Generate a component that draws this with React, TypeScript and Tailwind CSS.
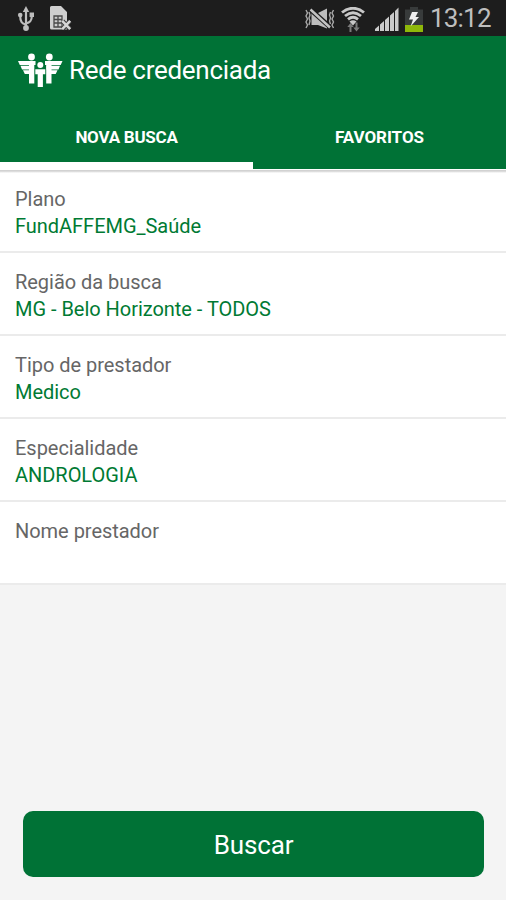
const FIELDS = [
  { label: 'Plano', value: 'FundAFFEMG_Saúde' },
  { label: 'Região da busca', value: 'MG - Belo Horizonte - TODOS' },
  { label: 'Tipo de prestador', value: 'Medico' },
  { label: 'Especialidade', value: 'ANDROLOGIA' },
  { label: 'Nome prestador', value: '' },
];

function UsbIcon() {
  return (
    <svg width="18" height="26" viewBox="0 0 18 26" fill="none" stroke="#bdbdbd" strokeWidth="2.2">
      <path d="M9 4v18M9 18.500C5 17.500 3.200 16 3.200 10M9 17.500c4-1 5.800-2.500 5.800-7.500" />
      <path d="M9 0 12.200 6H5.800z" fill="#bdbdbd" stroke="none" />
      <circle cx="9" cy="22" r="2.900" fill="#bdbdbd" stroke="none" />
      <circle cx="3.200" cy="9" r="2.300" fill="#bdbdbd" stroke="none" />
      <path d="M12.600 6.500H17V11h-4.400z" fill="#bdbdbd" stroke="none" />
    </svg>
  );
}

function SimIcon() {
  return (
    <svg width="22" height="25" viewBox="0 0 22 25">
      <path d="M1.500 0H11l6 6v17.500H1.500A1.500 1.500 0 0 1 0 22V1.500A1.500 1.500 0 0 1 1.500 0z" fill="#cfcfcf" />
      <path d="M4 10h8v11H4zM4 13.500h8M4 17h8M8 10v11" fill="none" stroke="#4a4a4a" strokeWidth="1.300" />
      <path d="m12.500 15 7.500 8m0-8-7.500 8" stroke="#3a3a3a" strokeWidth="4.500" />
      <path d="m12.200 14.800 8 8.400m0-8.400-8 8.400" stroke="#d6d6d6" strokeWidth="2.600" />
    </svg>
  );
}

function MutedIcon() {
  return (
    <svg width="30" height="22" viewBox="0 0 30 22">
      <path d="M6.500 5H13l9-4.500v20L13 17H6.500z" fill="#bdbdbd" />
      <path d="m6 2 19 17" stroke="#1d1d1d" strokeWidth="5" />
      <path d="m5.500 1.500 19.500 18" stroke="#c4c4c4" strokeWidth="2.400" />
      <path
        d="m1 2 1.500 3L1 8l1.500 3L1 14l1.500 3L1 20M28.500 2 27 5l1.500 3-1.500 3 1.500 3-1.500 3 1.500 3M4 4l1 3-1 3 1 3-1 4M25.500 4l-1 3 1 3-1 3 1 3"
        fill="none"
        stroke="#a8a8a8"
        strokeWidth="1.400"
      />
    </svg>
  );
}

function WifiIcon() {
  return (
    <svg width="24" height="25" viewBox="0 0 24 25" fill="none">
      <path d="M1 5.500C7.500-.2 16.500-.2 23 5.500M4 9c5-4 11-4 16 0M7 12.300c3.200-2.600 6.800-2.600 10 0" stroke="#c8c8c8" strokeWidth="2.800" />
      <path d="M8.500 14.500q3.500-2.500 7 0L12 18.500z" fill="#c8c8c8" />
      <path d="M9.500 25v-7M15.500 15.500v7" stroke="#7b7b7b" strokeWidth="2" />
      <path d="m6.300 20 3.200-4 3.200 4zM12.300 20.500h6.400l-3.200 4z" fill="#7b7b7b" />
    </svg>
  );
}

function SignalIcon() {
  return (
    <svg width="24" height="24" viewBox="0 0 24 24" fill="#cbcbcb">
      <path d="M0 24v-2l4-3.500V24zM5 24v-6.500l4-3.500v10zM10 24V13l4-3.500V24zM15 24V8.500L19 5v19zM20 24V4l3.500-3.500V24z" />
    </svg>
  );
}

function BatteryIcon() {
  return (
    <svg width="18" height="25" viewBox="0 0 18 25">
      <path d="M5 0h8v2.500h5V25H0V2.500h5z" fill="#383b3b" />
      <path d="M0 18h18v7H0z" fill="#8fb80a" />
      <path d="M7 5h6l-2.500 5H14L5.500 19.500l2.500-7H4z" fill="#eee" />
    </svg>
  );
}

function Logo() {
  return (
    <svg width="46" height="36" viewBox="0 0 46 36" fill="#fff">
      <circle cx="14.500" cy="4" r="3.400" />
      <circle cx="32.300" cy="4" r="3.400" />
      <circle cx="23.300" cy="12" r="3" />
      {/* asas */}
      <path d="M1 8h17.500v4H2.800zM45.500 8H28v4h15.700z" />
      <path d="M3.500 12.700H17v3.800H5zM43 12.700H29.500v3.800h12zM6 17.200h8v3.800H7.800zM40.500 17.200h-8V21h6.200z" />
      <path d="M12 11h5.300v19.500H12zM29.200 11h5.300v19.500h-5.300z" />
      <path d="M18.300 16.200h10v5h-2.400V34h-5.200V21.200h-2.400z" />
    </svg>
  );
}

export default function App() {
  return (
    <div className="flex h-[900px] w-[506px] flex-col overflow-hidden bg-[#f4f4f4] font-[Roboto,sans-serif]">
      <div className="flex h-9 shrink-0 items-start bg-[#1d1d1d] pl-[17px] pt-[6px]">
        <UsbIcon />
        <div className="ml-[15px]"><SimIcon /></div>
        <div className="ml-[233px] pt-[2px]"><MutedIcon /></div>
        <div className="ml-[6px] pt-px"><WifiIcon /></div>
        <div className="ml-[10px] pt-px"><SignalIcon /></div>
        <div className="ml-[6px] pt-px"><BatteryIcon /></div>
        <span className="ml-[7px] text-[26px] leading-6 tracking-[-0.8px] text-[#bebebe]">13:12</span>
      </div>

      <header className="flex h-[70px] shrink-0 items-center bg-[#007236] pl-[17px]">
        <Logo />
        <h1 className="ml-[6px] pb-[2px] text-[26px] leading-8 tracking-[-0.28px] text-white">Rede credenciada</h1>
      </header>

      <nav className="grid h-[63px] shrink-0 grid-cols-2 bg-[#007236] text-[17px] font-bold text-white">
        <div className="flex items-center justify-center border-b-7 border-white pt-[8px] tracking-[-0.25px]">NOVA BUSCA</div>
        <div className="flex items-center justify-center pt-px tracking-[-0.05px]">FAVORITOS</div>
      </nav>

      <div className="h-[3px] shrink-0 border-t border-white bg-linear-to-b from-[#d2d2d2] to-[#ececec]" />
      <main className="-mt-[2px] bg-clip-content">
        {FIELDS.map((f, i) => (
          <div
            key={f.label}
            className={`h-[83px] border-b-2 border-[#ebebeb] px-[15px] pt-4 text-xl leading-[27px] tracking-[-0.03px] ${
              i === 0 ? 'bg-linear-to-b from-[#d2d2d2] from-[1px] to-white to-[3px]' : 'bg-white'
            }`}
          >
            <div className="text-[#666]">{f.label}</div>
            <div className="text-[#007a33]">{f.value}</div>
          </div>
        ))}
      </main>

      <button className="mb-[23px] ml-[23px] mr-[22px] mt-auto h-[66px] rounded-[10px] bg-[#007236] pt-[3px] text-[26px] tracking-[-0.15px] text-white">
        Buscar
      </button>
    </div>
  );
}
